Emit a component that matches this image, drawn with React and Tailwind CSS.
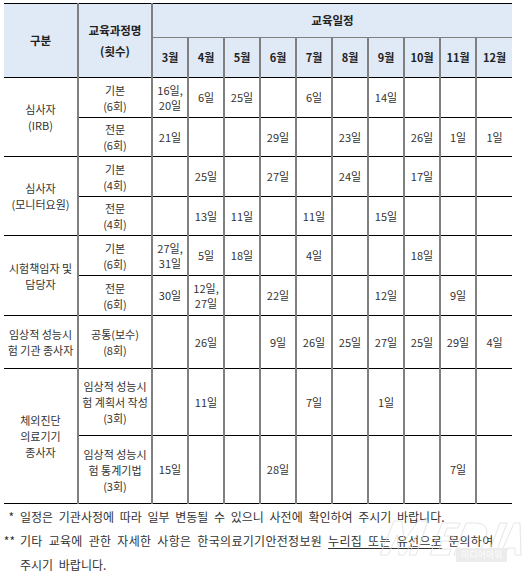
const months = ['3월', '4월', '5월', '6월', '7월', '8월', '9월', '10월', '11월', '12월']

// Each row: group label (only on first row of group), course label, dates by month index
const rows = [
  { group: ['심사자', '(IRB)'], span: 2, course: ['기본', '(6회)'], h: 'h-[40px]', dates: { 0: ['16일,', '20일'], 1: ['6일'], 2: ['25일'], 4: ['6일'], 6: ['14일'] } },
  { course: ['전문', '(6회)'], h: 'h-[39px]', dates: { 0: ['21일'], 3: ['29일'], 5: ['23일'], 7: ['26일'], 8: ['1일'], 9: ['1일'] } },
  { group: ['심사자', '(모니터요원)'], span: 2, course: ['기본', '(4회)'], h: 'h-[40px]', dates: { 1: ['25일'], 3: ['27일'], 5: ['24일'], 7: ['17일'] } },
  { course: ['전문', '(4회)'], h: 'h-[39px]', dates: { 1: ['13일'], 2: ['11일'], 4: ['11일'], 6: ['15일'] } },
  { group: ['시험책임자 및', '담당자'], span: 2, course: ['기본', '(6회)'], h: 'h-[40px]', dates: { 0: ['27일,', '31일'], 1: ['5일'], 2: ['18일'], 4: ['4일'], 7: ['18일'] } },
  { course: ['전문', '(6회)'], h: 'h-[40px]', dates: { 0: ['30일'], 1: ['12일,', '27일'], 3: ['22일'], 6: ['12일'], 8: ['9일'] } },
  { group: ['임상적 성능시', '험 기관 종사자'], span: 1, course: ['공통(보수)', '(8회)'], h: 'h-[53px]', dates: { 1: ['26일'], 3: ['9일'], 4: ['26일'], 5: ['25일'], 6: ['27일'], 7: ['25일'], 8: ['29일'], 9: ['4일'] } },
  { group: ['체외진단', '의료기기', '종사자'], span: 2, course: ['임상적 성능시', '험 계획서 작성', '(3회)'], h: 'h-[67px]', dates: { 1: ['11일'], 4: ['7일'], 6: ['1일'] } },
  { course: ['임상적 성능시', '험 통계기법', '(3회)'], h: 'h-[68px]', dates: { 0: ['15일'], 3: ['28일'], 8: ['7일'] } },
]

const cell = 'border-y border-y-black border-x-2 border-x-[#7f7f7f] p-0 text-center align-middle'
const head = 'bg-[#e0eaf6] font-bold text-[#222] text-[11.5px]'

function Lines({ items, className }) {
  return (
    <div className={className}>
      {items.map((t, i) => (
        <div key={i} className="whitespace-nowrap">{t}</div>
      ))}
    </div>
  )
}

export default function App() {
  return (
    <div className="w-[524px] h-[578px] bg-white overflow-hidden relative text-[#333]" style={{ fontFamily: '"Noto Sans CJK KR", "Noto Sans", sans-serif' }}>
      <div className="pl-[4px] pt-[3px]">
        <table className="table-fixed border-collapse w-[508px]">
          <colgroup>
            <col className="w-[74px]" />
            <col className="w-[74px]" />
            {months.map((m) => (
              <col key={m} className="w-[36px]" />
            ))}
          </colgroup>
          <thead>
            <tr className="h-[34px]">
              <th rowSpan={2} className={`${cell} ${head} border-l-0`}>구분</th>
              <th rowSpan={2} className={`${cell} ${head} leading-[21px]`}>
                <div>교육과정명</div>
                <div>(횟수)</div>
              </th>
              <th colSpan={10} className={`${cell} ${head} border-r-0 border-b-[#7f7f7f]`}>교육일정</th>
            </tr>
            <tr className="h-[40px]">
              {months.map((m, i) => (
                <th key={m} className={`${cell} ${head} text-[11px] ${i === 9 ? 'border-r-0' : ''}`}>{m}</th>
              ))}
            </tr>
          </thead>
          <tbody className="text-[11px] leading-[16px]">
            {rows.map((r, ri) => (
              <tr key={ri} className={r.h}>
                {r.group && (
                  <td rowSpan={r.span} className={`${cell} border-l-0`}>
                    <Lines items={r.group} />
                  </td>
                )}
                <td className={cell}>
                  <Lines items={r.course} />
                </td>
                {months.map((m, i) => (
                  <td key={m} className={`${cell} ${i === 9 ? 'border-r-0' : ''}`}>
                    {r.dates[i] && <Lines items={r.dates[i]} className="leading-[15px]" />}
                  </td>
                ))}
              </tr>
            ))}
          </tbody>
        </table>
      </div>

      {/* Footnotes */}
      <div className="text-[12px] leading-[24px] text-[#333] mt-[1px] [word-spacing:3px]">
        <div className="flex">
          <span className="w-[20px] text-right pr-[6px]">*</span>
          <span className="whitespace-nowrap">일정은 기관사정에 따라 일부 변동될 수 있으니 사전에 확인하여 주시기 바랍니다.</span>
        </div>
        <div className="flex">
          <span className="w-[20px] text-right pr-[5px]">**</span>
          <div className="whitespace-nowrap">
            <span className="tracking-[0.3px]">
              기타 교육에 관한 자세한 사항은 한국의료기기안전정보원 <span className="underline underline-offset-2">누리집 또는 유선으로</span> 문의하여
            </span>
            <br />
            주시기 바랍니다.
          </div>
        </div>
      </div>

      {/* Faint watermark logo, drawn over the notes */}
      <div className="absolute left-[376px] top-[515px] w-[146px] h-[50px] pointer-events-none opacity-70" aria-hidden="true">
        <svg width="146" height="50" viewBox="0 0 146 50" className="absolute left-0 top-0">
          <g fill="none" stroke="#dcdcdc" strokeWidth="1">
            <path d="M4 40 L18 6 L26 6 L28 26 L42 6 L52 6 L40 40 L33 40 L41 20 L28 40 L23 40 L21 20 L12 40 Z" />
            <path d="M54 40 L66 8 L84 8 L82 13 L71 13 L68 21 L78 21 L76 26 L66 26 L63 34 L75 34 L73 40 Z" />
            <path d="M78 40 L90 8 L100 8 Q114 8 110 22 Q106 40 90 40 Z" />
            <path d="M112 40 L124 8 L131 8 L119 40 Z" />
            <path d="M124 40 L138 8 L144 8 L145 40 L139 40 L139 33 L132 33 L129 40 Z" />
          </g>
        </svg>
        <div className="absolute left-[80px] top-[33px] h-[14px] px-[5px] bg-[#e4e4e4] text-white text-[9px] leading-[14px]">미디어아워</div>
      </div>
    </div>
  )
}
